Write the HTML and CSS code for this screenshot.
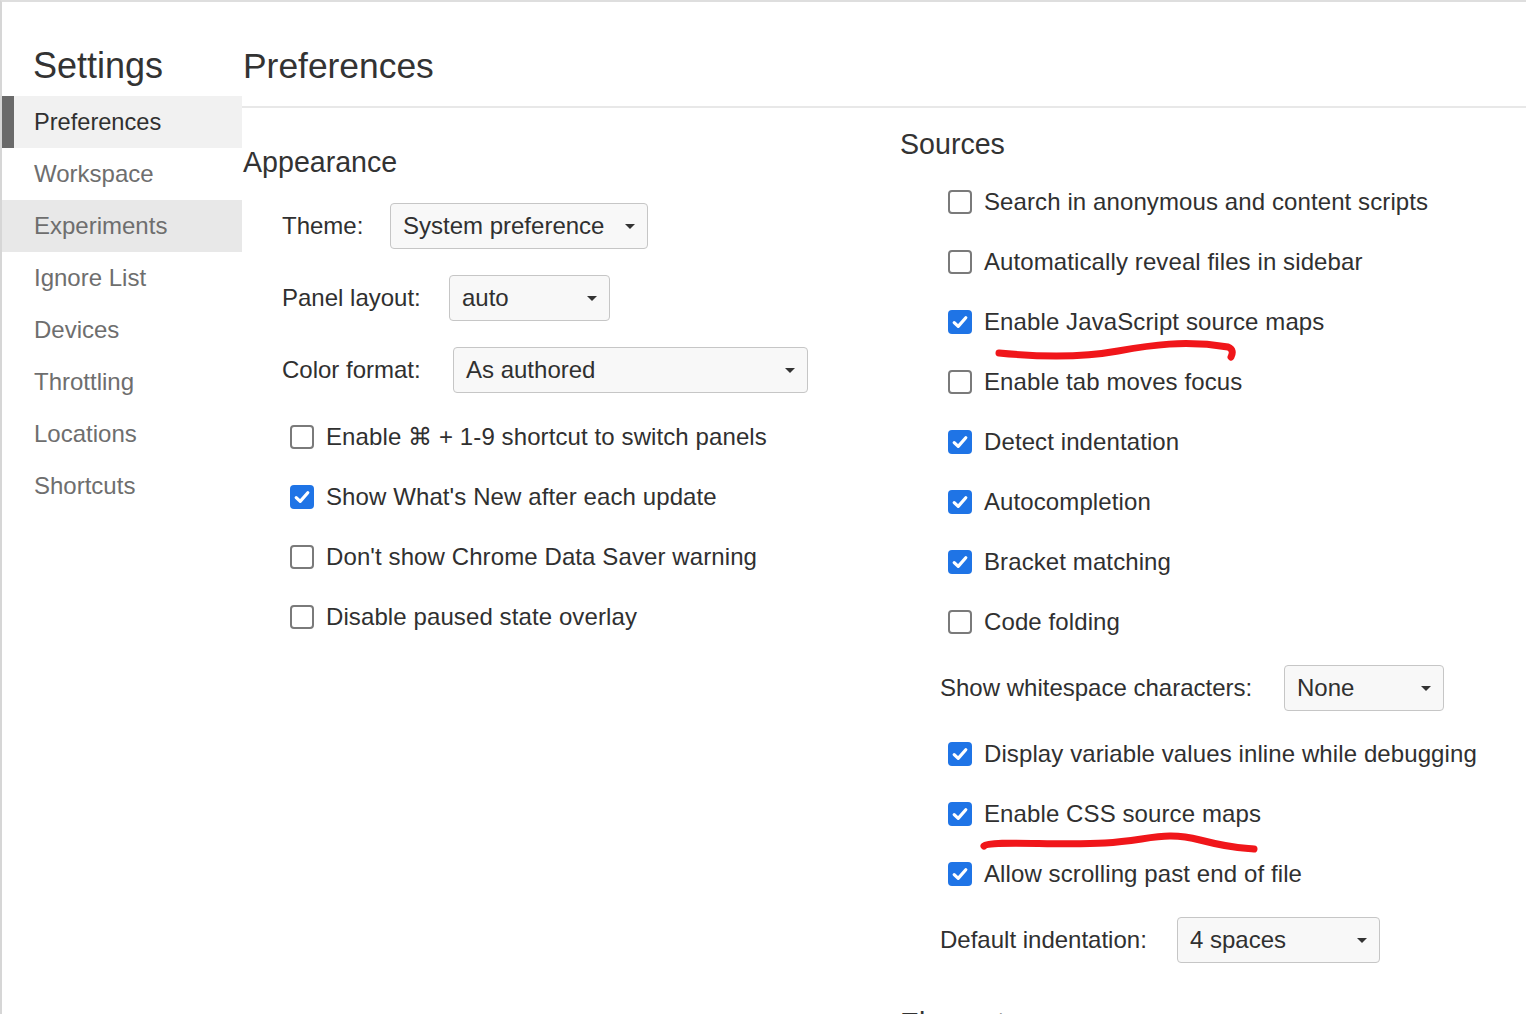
FILE: index.html
```html
<!DOCTYPE html>
<html lang="en">
<head>
<meta charset="utf-8">
<title>Settings - Preferences</title>
<link rel="stylesheet" href="styles.css">
</head>
<body>
<div class="window">
  <aside class="sidebar">
    <h1 class="sidebar-title">Settings</h1>
    <nav class="nav">
      <div class="nav-item is-selected">Preferences</div>
      <div class="nav-item">Workspace</div>
      <div class="nav-item is-hover">Experiments</div>
      <div class="nav-item">Ignore List</div>
      <div class="nav-item">Devices</div>
      <div class="nav-item">Throttling</div>
      <div class="nav-item">Locations</div>
      <div class="nav-item">Shortcuts</div>
    </nav>
  </aside>
  <main class="main">
    <header class="main-header"><h2 class="main-title">Preferences</h2></header>
    <div class="columns">
      <section class="col col-left">
        <h3 class="section-title">Appearance</h3>
        <div class="field-row first">
          <span class="field-label l-theme">Theme:</span>
          <div class="select w-theme"><span class="select-text">System preference</span><span class="caret"></span></div>
        </div>
        <div class="field-row">
          <span class="field-label l-panel">Panel layout:</span>
          <div class="select w-panel"><span class="select-text">auto</span><span class="caret"></span></div>
        </div>
        <div class="field-row">
          <span class="field-label l-color">Color format:</span>
          <div class="select w-color"><span class="select-text">As authored</span><span class="caret"></span></div>
        </div>
        <div class="checklist after-fields">
          <label class="check-row"><span class="box"></span><span class="check-text">Enable ⌘ + 1-9 shortcut to switch panels</span></label>
          <label class="check-row"><span class="box checked"><svg viewBox="0 0 24 24"><path d="M6.2 12.6 L10.2 16.4 L17.8 7.8"/></svg></span><span class="check-text">Show What's New after each update</span></label>
          <label class="check-row"><span class="box"></span><span class="check-text">Don't show Chrome Data Saver warning</span></label>
          <label class="check-row"><span class="box"></span><span class="check-text">Disable paused state overlay</span></label>
        </div>
      </section>
      <section class="col col-right">
        <h3 class="section-title">Sources</h3>
        <div class="checklist after-title">
          <label class="check-row"><span class="box"></span><span class="check-text">Search in anonymous and content scripts</span></label>
          <label class="check-row"><span class="box"></span><span class="check-text">Automatically reveal files in sidebar</span></label>
          <label class="check-row"><span class="box checked"><svg viewBox="0 0 24 24"><path d="M6.2 12.6 L10.2 16.4 L17.8 7.8"/></svg></span><span class="check-text">Enable JavaScript source maps</span></label>
          <label class="check-row"><span class="box"></span><span class="check-text">Enable tab moves focus</span></label>
          <label class="check-row"><span class="box checked"><svg viewBox="0 0 24 24"><path d="M6.2 12.6 L10.2 16.4 L17.8 7.8"/></svg></span><span class="check-text">Detect indentation</span></label>
          <label class="check-row"><span class="box checked"><svg viewBox="0 0 24 24"><path d="M6.2 12.6 L10.2 16.4 L17.8 7.8"/></svg></span><span class="check-text">Autocompletion</span></label>
          <label class="check-row"><span class="box checked"><svg viewBox="0 0 24 24"><path d="M6.2 12.6 L10.2 16.4 L17.8 7.8"/></svg></span><span class="check-text">Bracket matching</span></label>
          <label class="check-row"><span class="box"></span><span class="check-text">Code folding</span></label>
        </div>
        <div class="field-row gap13">
          <span class="field-label l-space">Show whitespace characters:</span>
          <div class="select w-none"><span class="select-text">None</span><span class="caret"></span></div>
        </div>
        <div class="checklist gap13">
          <label class="check-row"><span class="box checked"><svg viewBox="0 0 24 24"><path d="M6.2 12.6 L10.2 16.4 L17.8 7.8"/></svg></span><span class="check-text">Display variable values inline while debugging</span></label>
          <label class="check-row"><span class="box checked"><svg viewBox="0 0 24 24"><path d="M6.2 12.6 L10.2 16.4 L17.8 7.8"/></svg></span><span class="check-text">Enable CSS source maps</span></label>
          <label class="check-row"><span class="box checked"><svg viewBox="0 0 24 24"><path d="M6.2 12.6 L10.2 16.4 L17.8 7.8"/></svg></span><span class="check-text">Allow scrolling past end of file</span></label>
        </div>
        <div class="field-row gap13">
          <span class="field-label l-indent">Default indentation:</span>
          <div class="select w-indent"><span class="select-text">4 spaces</span><span class="caret"></span></div>
        </div>
        <h3 class="section-title next-section">Elements</h3>
      </section>
    </div>
  </main>
  <svg class="annotations" width="1526" height="1014" viewBox="0 0 1526 1014">
    <path d="M999 353 C 1040 357, 1085 357, 1118 351 S 1185 340, 1228 347 C 1233 349, 1233 353, 1231 357"/>
    <path d="M984 846 C 990 840, 1060 846, 1105 843 S 1165 831, 1200 840 S 1245 848, 1254 849"/>
  </svg>
</div>
</body>
</html>
```

FILE: styles.css
```css
* { box-sizing: border-box; }

html, body {
  margin: 0;
  padding: 0;
  background: #ffffff;
}

body {
  font-family: "Liberation Sans", Arial, Helvetica, sans-serif;
  color: #303030;
}

.window {
  position: relative;
  width: 1526px;
  height: 1014px;
  overflow: hidden;
  display: flex;
  border-top: 2px solid #dedede;
  border-left: 2px solid #d6d6d6;
}

/* Sidebar */
.sidebar {
  width: 240px;
  flex: none;
}

.sidebar-title {
  margin: 0;
  height: 94px;
  padding: 44px 0 0 31px;
  font-size: 36px;
  line-height: 40px;
  font-weight: normal;
  color: #333333;
}

.nav-item {
  height: 52px;
  line-height: 52px;
  padding-left: 32px;
  font-size: 24px;
  color: #6e6e6e;
}

.nav-item.is-selected {
  background: #f1f1f1;
  border-left: 12px solid #6a6a6a;
  padding-left: 20px;
  color: #303030;
  font-size: 23.6px;
}

.nav-item.is-hover {
  background: #e8e8e8;
}

/* Main */
.main {
  flex: 1;
  min-width: 0;
}

.main-header {
  height: 106px;
  border-bottom: 2px solid #e8e8e8;
}

.main-title {
  margin: 0;
  padding: 44px 0 0 1px;
  font-size: 35.4px;
  line-height: 40px;
  font-weight: normal;
  color: #333333;
}

.columns {
  display: grid;
  grid-template-columns: 658px 1fr;
}

.col-left { padding-top: 36px; }
.col-right { padding-top: 18px; }

.section-title {
  margin: 0;
  font-size: 28.6px;
  line-height: 36px;
  font-weight: normal;
  color: #333333;
}

.col-left .section-title { padding-left: 1px; }

.next-section { margin-top: 42px; }

/* Fields */
.field-row {
  display: flex;
  align-items: center;
  height: 46px;
  padding-left: 40px;
  margin-top: 26px;
}

.field-row.first { margin-top: 23px; }
.field-row.gap13 { margin-top: 13px; }

.field-label {
  flex: none;
  font-size: 24px;
  color: #303030;
  white-space: nowrap;
}

.l-theme { width: 108px; }
.l-panel { width: 167px; }
.l-color { width: 171px; }
.l-space { width: 344px; }
.l-indent { width: 237px; }

.select {
  height: 46px;
  display: flex;
  align-items: center;
  padding: 0 12px 0 12px;
  border: 1.5px solid #c6c6c6;
  border-radius: 4px;
  background: #f8f8f8;
  font-size: 24px;
  color: #303030;
}

.select-text { white-space: nowrap; }

.caret {
  margin-left: auto;
  width: 0;
  height: 0;
  border-left: 5px solid transparent;
  border-right: 5px solid transparent;
  border-top: 5px solid #333333;
}

.w-theme { width: 258px; }
.w-panel { width: 161px; }
.w-color { width: 355px; }
.w-none { width: 160px; }
.w-indent { width: 203px; }

/* Checkboxes */
.checklist.after-fields { margin-top: 14px; }
.checklist.after-title { margin-top: 10px; }
.checklist.gap13 { margin-top: 13px; }

.check-row {
  display: flex;
  align-items: center;
  height: 60px;
  padding-left: 48px;
  gap: 12px;
}

.box {
  flex: none;
  width: 24px;
  height: 24px;
  border: 2px solid #7a7a7a;
  border-radius: 4px;
  background: #ffffff;
  display: flex;
  align-items: center;
  justify-content: center;
}

.box.checked {
  border: none;
  background: #1f74e6;
}

.box svg {
  width: 24px;
  height: 24px;
  display: block;
}

.box svg path {
  fill: none;
  stroke: #ffffff;
  stroke-width: 3.2;
  stroke-linecap: round;
  stroke-linejoin: round;
}

.check-text {
  font-size: 24px;
  color: #303030;
  white-space: nowrap;
  letter-spacing: 0.1px;
}

/* Hand-drawn annotations */
.annotations {
  position: absolute;
  left: -2px;
  top: -2px;
  pointer-events: none;
}

.annotations path {
  fill: none;
  stroke: #f0161a;
  stroke-width: 7;
  stroke-linecap: round;
  stroke-linejoin: round;
}
```
